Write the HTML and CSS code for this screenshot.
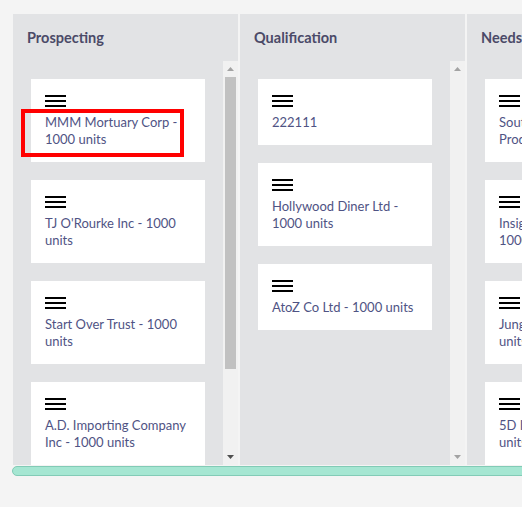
FILE: index.html
```html
<!DOCTYPE html>
<html>
<head>
<meta charset="utf-8">
<link rel="stylesheet" href="styles.css">
</head>
<body>
<div class="board">
  <div class="columns">
    <section class="column">
      <h2 class="col-title">Prospecting</h2>
      <div class="col-body">
        <div class="cards">
          <div class="card">
            <div class="menu-icon"></div>
            <div class="card-text">MMM Mortuary Corp - 1000 units</div>
            <div class="highlight"></div>
          </div>
          <div class="card">
            <div class="menu-icon"></div>
            <div class="card-text">TJ O'Rourke Inc - 1000 units</div>
          </div>
          <div class="card">
            <div class="menu-icon"></div>
            <div class="card-text">Start Over Trust - 1000 units</div>
          </div>
          <div class="card">
            <div class="menu-icon"></div>
            <div class="card-text">A.D. Importing Company Inc - 1000 units</div>
          </div>
        </div>
        <div class="vscroll">
          <svg class="arrow dim" width="7" height="4" viewBox="0 0 7 4"><path d="M3.5 0L7 4H0z"/></svg>
          <div class="thumb"></div>
          <div class="spacer"></div>
          <svg class="arrow" width="7" height="4" viewBox="0 0 7 4"><path d="M0 0H7L3.5 4z"/></svg>
        </div>
      </div>
    </section>
    <section class="column">
      <h2 class="col-title">Qualification</h2>
      <div class="col-body">
        <div class="cards">
          <div class="card">
            <div class="menu-icon"></div>
            <div class="card-text">222111</div>
          </div>
          <div class="card">
            <div class="menu-icon"></div>
            <div class="card-text">Hollywood Diner Ltd - 1000 units</div>
          </div>
          <div class="card">
            <div class="menu-icon"></div>
            <div class="card-text">AtoZ Co Ltd - 1000 units</div>
          </div>
        </div>
        <div class="vscroll">
          <svg class="arrow dim" width="7" height="4" viewBox="0 0 7 4"><path d="M3.5 0L7 4H0z"/></svg>
          <div class="spacer"></div>
          <svg class="arrow dim" width="7" height="4" viewBox="0 0 7 4"><path d="M0 0H7L3.5 4z"/></svg>
        </div>
      </div>
    </section>
    <section class="column">
      <h2 class="col-title">Needs Analysis</h2>
      <div class="col-body">
        <div class="cards">
          <div class="card">
            <div class="menu-icon"></div>
            <div class="card-text">Southern Wholesale Products - 1000 units</div>
          </div>
          <div class="card">
            <div class="menu-icon"></div>
            <div class="card-text">Insignia Design Inc - 1000 units</div>
          </div>
          <div class="card">
            <div class="menu-icon"></div>
            <div class="card-text">Jungle Toys Ltd - 1000 units</div>
          </div>
          <div class="card">
            <div class="menu-icon"></div>
            <div class="card-text">5D Imaging Ltd - 1000 units</div>
          </div>
        </div>
        <div class="vscroll">
          <svg class="arrow dim" width="7" height="4" viewBox="0 0 7 4"><path d="M3.5 0L7 4H0z"/></svg>
          <div class="thumb"></div>
          <div class="spacer"></div>
          <svg class="arrow" width="7" height="4" viewBox="0 0 7 4"><path d="M0 0H7L3.5 4z"/></svg>
        </div>
      </div>
    </section>
  </div>
  <div class="hscroll"></div>
</div>
</body>
</html>
```
FILE: styles.css
```css
html, body {
  margin: 0;
  padding: 0;
}
body {
  background: #f4f4f4;
  font-family: Lato, "Open Sans", sans-serif;
  width: 522px;
  height: 507px;
  overflow: hidden;
}
.board {
  padding: 14px 0 0 12px;
}
.columns {
  display: flex;
  gap: 2px;
  height: 451px;
  margin-left: 1px;
}
.column {
  flex: 0 0 225px;
  background: #e2e3e5;
  display: flex;
  flex-direction: column;
  min-height: 0;
}
.col-title {
  margin: 0;
  box-sizing: border-box;
  height: 47px;
  padding: 15px 0 0 14px;
  font-size: 14.5px;
  font-weight: 700;
  line-height: 18px;
  color: #4b4a68;
  white-space: nowrap;
}
.col-body {
  flex: 1;
  display: flex;
  min-height: 0;
  overflow: hidden;
}
.cards {
  flex: 1;
  padding: 18px;
  display: flex;
  flex-direction: column;
  gap: 18px;
  overflow: hidden;
  min-width: 0;
}
.card {
  flex-shrink: 0;
  position: relative;
  background: #ffffff;
  padding: 16px 14px 12px;
}
.menu-icon {
  width: 21px;
  height: 12px;
  margin-bottom: 7px;
  background: linear-gradient(#000 0 2px, transparent 2px 5px, #000 5px 7px, transparent 7px 10px, #000 10px 12px);
}
.card-text {
  font-size: 13px;
  line-height: 17px;
  padding-bottom: 2px;
  color: #4f5384;
}
.highlight {
  position: absolute;
  left: -10px;
  top: 30px;
  width: 163px;
  height: 48px;
  box-sizing: border-box;
  border: 4px solid #ff0000;
}
.vscroll {
  flex: 0 0 15px;
  background: #f1f1f1;
  display: flex;
  flex-direction: column;
  align-items: center;
  padding: 6px 0;
  box-sizing: border-box;
}
.arrow {
  display: block;
  fill: #505050;
  flex-shrink: 0;
}
.arrow.dim {
  fill: #a3a3a3;
}
.thumb {
  width: 11px;
  height: 292px;
  margin-top: 6px;
  background: #c1c1c1;
  flex-shrink: 0;
}
.spacer {
  flex: 1;
}
.hscroll {
  margin-top: 1px;
  width: 600px;
  height: 10px;
  box-sizing: border-box;
  border: 1px solid #82cbb6;
  background: #a5e6d2;
  border-radius: 5px 0 0 5px;
}
```
